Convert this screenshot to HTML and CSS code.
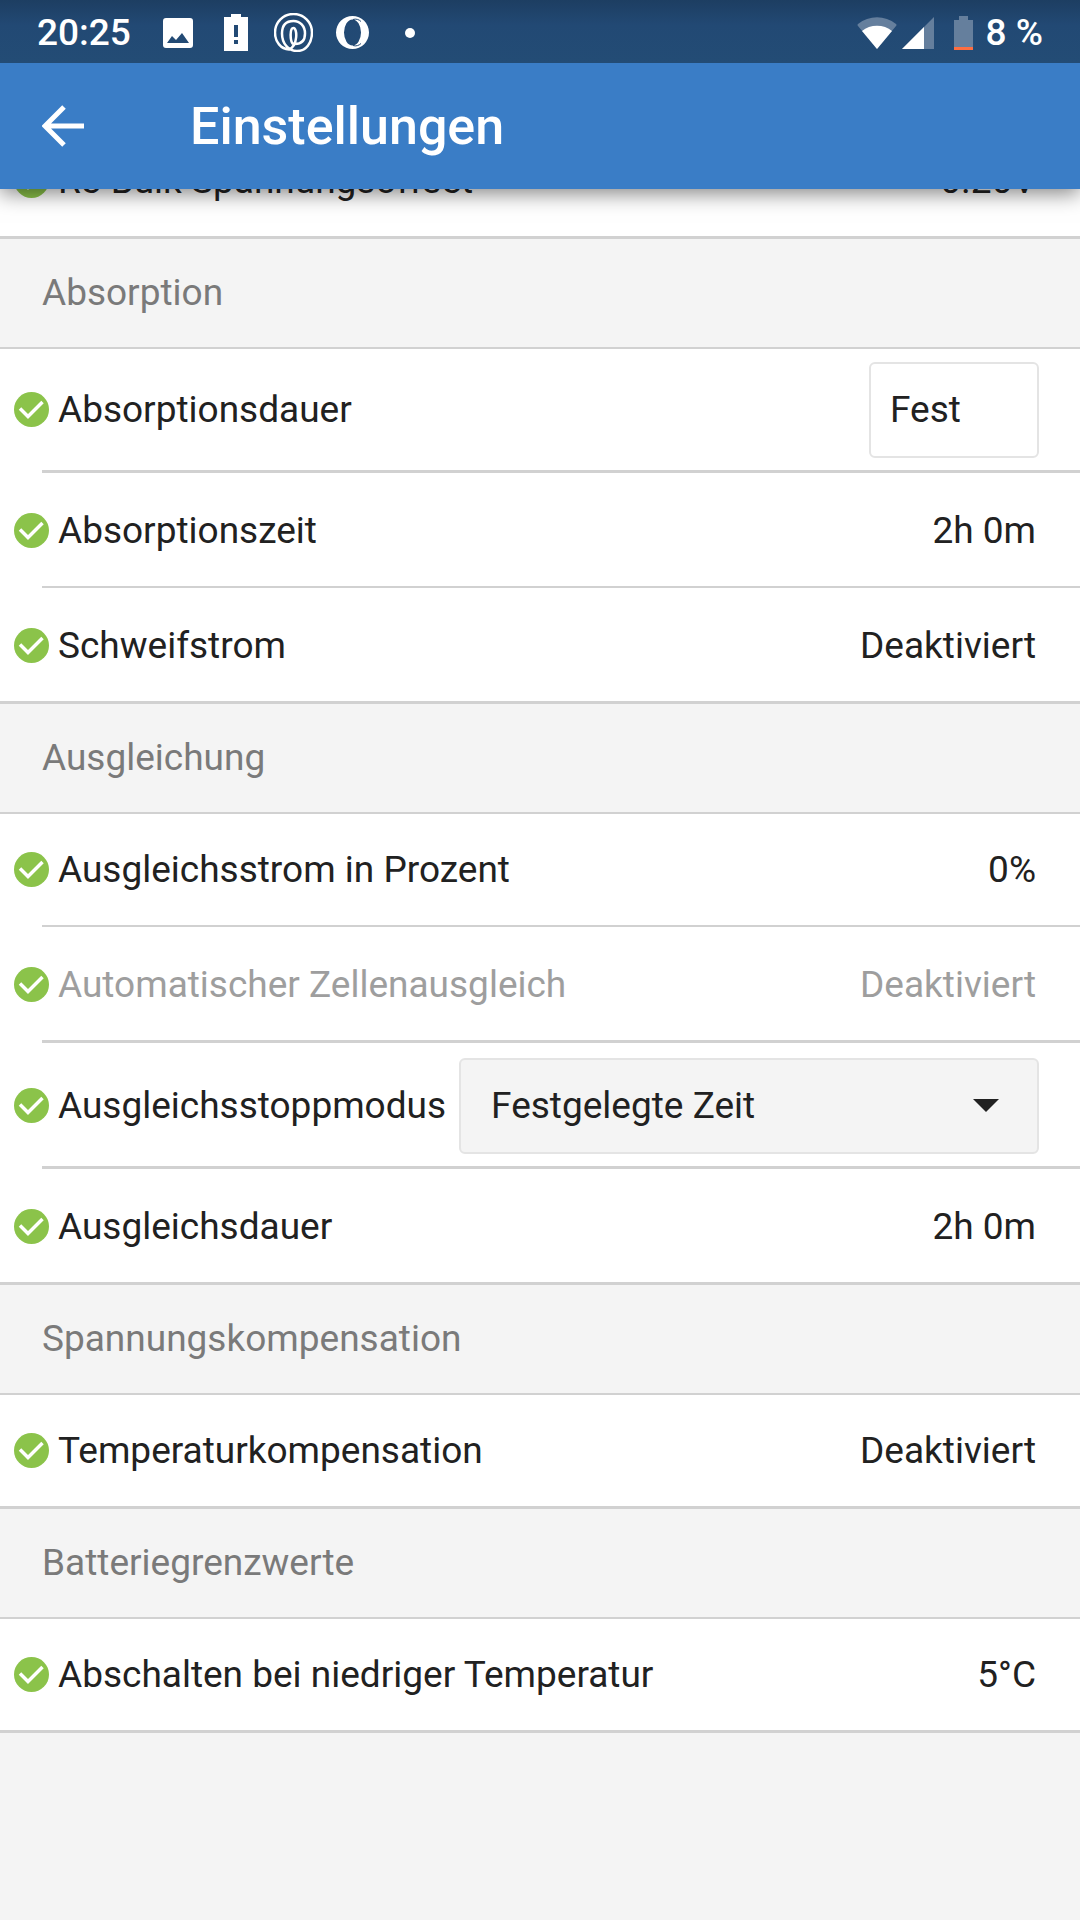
FILE: index.html
```html
<!DOCTYPE html>
<html lang="de">
<head>
<meta charset="utf-8">
<meta name="viewport" content="width=device-width, initial-scale=1">
<title>Einstellungen</title>
<link rel="stylesheet" href="styles.css">
</head>
<body>
<svg class="symbols" aria-hidden="true">
  <symbol id="check" viewBox="0 0 35 35">
    <circle cx="17.500" cy="17.500" r="17.500" fill="#8bc34a"/>
    <path d="M6 16.500l8 8L28.500 10" fill="none" stroke="#fff" stroke-width="3.500"/>
  </symbol>
</svg>

<header class="top">
  <div class="status">
    <div class="status-group">
      <time class="clock">20:25</time>
      <svg class="st-image" viewBox="0 0 30 30"><path fill="#fff" fill-rule="evenodd" d="M3 0h24a3 3 0 0 1 3 3v24a3 3 0 0 1-3 3H3a3 3 0 0 1-3-3V3a3 3 0 0 1 3-3zM4 25h22l-7-10-6 7-4-4z"/></svg>
      <svg class="st-alert" viewBox="0 0 24 37"><path fill="#fff" fill-rule="evenodd" d="M7 0h10v3h7v34H0V3h7zM10 11v12h4V11zM10 26v4h4v-4z"/></svg>
      <svg class="st-spiral" viewBox="0 0 39 39" fill="none" stroke="#fff" stroke-width="2.500">
        <path d="M19 31C16 28 15.500 15 19.500 15S24 33 15 36.500C7 36 1 29 1 19.500a18.500 18.500 0 0 1 37 0C38 30 32 38 23 38S8 30 8 20.500 13 8 19.500 8 31 13 31 20.500 27 31 21 31"/>
      </svg>
      <svg class="st-opera" viewBox="0 0 33 33"><path fill="#fff" fill-rule="evenodd" d="M16.500 0a16.500 16.500 0 1 1 0 33 16.500 16.500 0 1 1 0-33zM16.500 3.500a8.500 13 0 1 0 0 26 8.500 13 0 1 0 0-26z"/><path fill="none" stroke="#234a74" d="M17 3.500c3-1 6 0 8 2M17 29.500c3 1 6 0 8-2"/></svg>
      <span class="st-dot"></span>
    </div>
    <div class="status-group">
      <svg class="st-wifi" viewBox="0 0 40 32"><path fill="#657f9d" d="M20 32L1 9Q0 8 1 7C12-2 28-2 39 7q1 1 0 2z"/><path fill="#fff" d="M20 32L5 14c8-7 22-7 30 0z"/></svg>
      <svg class="st-signal" viewBox="0 0 32 32"><path fill="#657f9d" d="M32 0v32H0z"/><path fill="#fff" d="M22 10v22H0z"/></svg>
      <svg class="st-battery" viewBox="0 0 19 34"><path fill="#657f9d" d="M5 0h9v4h5v30H0V4h5z"/><path fill="#ff6e40" d="M0 31h19v3H0z"/></svg>
      <span class="clock">8 %</span>
    </div>
  </div>
  <div class="appbar">
    <button class="back" type="button" aria-label="Zurück">
      <svg viewBox="0 0 42 42"><path d="M42 21H4M22 2L3 21l19 19" fill="none" stroke="#fff" stroke-width="5"/></svg>
    </button>
    <h1 class="title">Einstellungen</h1>
  </div>
</header>

<main class="settings">
  <ul class="list">
    <li class="item"><div class="row"><svg class="ok"><use href="#check"/></svg><span class="label">Re-Bulk Spannungsoffset</span><span class="value">0.20V</span></div></li>
  </ul>

  <h2 class="section">Absorption</h2>
  <ul class="list">
    <li class="item"><div class="row control"><svg class="ok"><use href="#check"/></svg><label class="label" for="mode">Absorptionsdauer</label>
      <select class="select short" id="mode"><option>Fest</option></select></div></li>
    <li class="item thick"><div class="row"><svg class="ok"><use href="#check"/></svg><span class="label">Absorptionszeit</span><span class="value">2h 0m</span></div></li>
    <li class="item"><div class="row"><svg class="ok"><use href="#check"/></svg><span class="label">Schweifstrom</span><span class="value">Deaktiviert</span></div></li>
  </ul>

  <h2 class="section">Ausgleichung</h2>
  <ul class="list">
    <li class="item"><div class="row"><svg class="ok"><use href="#check"/></svg><span class="label">Ausgleichsstrom in Prozent</span><span class="value">0%</span></div></li>
    <li class="item"><div class="row disabled"><svg class="ok"><use href="#check"/></svg><span class="label">Automatischer Zellenausgleich</span><span class="value">Deaktiviert</span></div></li>
    <li class="item thick"><div class="row control"><svg class="ok"><use href="#check"/></svg><label class="label" for="stop">Ausgleichsstoppmodus</label>
      <div class="dropdown"><select class="select" id="stop"><option>Festgelegte Zeit</option></select><svg class="caret" viewBox="0 0 26 13"><path d="M0 0h26L13 13z"/></svg></div></div></li>
    <li class="item thick"><div class="row"><svg class="ok"><use href="#check"/></svg><span class="label">Ausgleichsdauer</span><span class="value">2h 0m</span></div></li>
  </ul>

  <h2 class="section">Spannungskompensation</h2>
  <ul class="list">
    <li class="item"><div class="row"><svg class="ok"><use href="#check"/></svg><span class="label">Temperaturkompensation</span><span class="value">Deaktiviert</span></div></li>
  </ul>

  <h2 class="section">Batteriegrenzwerte</h2>
  <ul class="list last">
    <li class="item"><div class="row"><svg class="ok"><use href="#check"/></svg><span class="label">Abschalten bei niedriger Temperatur</span><span class="value">5°C</span></div></li>
  </ul>
</main>
</body>
</html>
```
FILE: styles.css
```css
* { box-sizing: border-box; }

body {
  margin: 0;
  min-height: 100vh;
  background: #f4f4f4;
  color: #212121;
  font-family: Roboto, "Liberation Sans", sans-serif;
  font-size: 37px;
  line-height: 44px;
}

svg { display: block; flex: none; }
.symbols { position: absolute; width: 0; height: 0; }

/* Status bar and app bar stay above the scrolled list */
.top {
  position: sticky;
  top: 0;
  z-index: 2;
  color: #fff;
  background: #3a7dc6;
  box-shadow: 0 4px 20px rgba(0, 0, 0, 0.5);
}
.status {
  display: flex;
  justify-content: space-between;
  align-items: center;
  height: 63px;
  padding: 2px 37px 0;
  background: linear-gradient(#1d3e62, #224974 40%, #234c75);
}
.status-group { display: flex; align-items: center; }
.clock { font-weight: 500; }
.st-image { width: 30px; height: 30px; margin-left: 32px; }
.st-alert { width: 24px; height: 37px; margin-left: 31px; }
.st-spiral { width: 39px; height: 39px; margin-left: 26px; }
.st-opera { width: 33px; height: 33px; margin-left: 23px; }
.st-dot { width: 10px; height: 10px; margin-left: 36px; border-radius: 50%; background: #fff; }
.st-wifi { width: 40px; height: 32px; }
.st-signal { width: 32px; height: 32px; margin-left: 5px; }
.st-battery { width: 19px; height: 34px; margin: 0 13px 0 20px; }

.appbar { display: flex; align-items: center; height: 126px; padding: 0 32px; }
.back { padding: 10px; border: 0; background: none; }
.back svg { width: 42px; height: 42px; }
.title { margin: 0 0 0 96px; padding-top: 2px; font-size: 52px; line-height: 60px; font-weight: 500; }

/* The list is scrolled a little under the app bar */
.settings { margin-top: -64px; }

.section {
  margin: 0;
  padding: 32px 42px;
  border-top: 3px solid #d1d1d1;
  border-bottom: 2px solid #d1d1d1;
  color: #7a7a7a;
  font-size: 37px;
  line-height: 44px;
  font-weight: 400;
}

.list { margin: 0; padding: 0; list-style: none; background: #fff; }
.last { border-bottom: 3px solid #d1d1d1; }
.item + .item::before {
  content: "";
  display: block;
  height: 2px;
  margin-left: 42px;
  background: #d1d1d1;
}
.item.thick::before { height: 3px; }

.row { display: flex; align-items: center; min-height: 111px; padding: 0 44px 0 14px; }
.item + .item .row { min-height: 113px; padding-top: 2px; }
.row.control { min-height: 121px; padding-right: 41px; }
.item + .item .row.control { min-height: 123px; }
.ok { width: 35px; height: 35px; margin-right: 9px; }
.label { margin-right: auto; }
.disabled { color: #9e9e9e; }

.select {
  appearance: none;
  height: 96px;
  width: 100%;
  padding: 0 30px;
  border: 2px solid #e4e4e4;
  border-radius: 6px;
  background: #f4f4f4;
  color: inherit;
  font: inherit;
}
.short { width: 170px; padding: 0 19px; background: #fff; }
.dropdown { display: grid; flex: 1; align-items: center; margin-left: 13px; }
.dropdown > * { grid-area: 1 / 1; }
.caret { width: 26px; height: 13px; margin-right: 40px; justify-self: end; fill: #212121; pointer-events: none; }
```
